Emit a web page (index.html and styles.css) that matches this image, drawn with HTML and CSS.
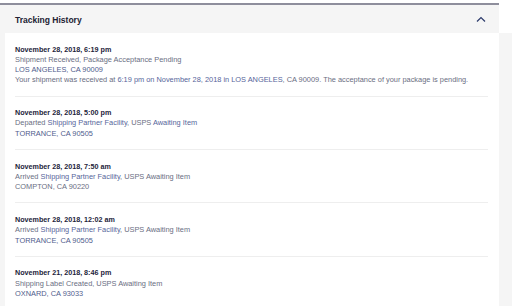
FILE: index.html
```html
<!DOCTYPE html>
<html>
<head>
<meta charset="utf-8">
<link rel="stylesheet" href="styles.css">
</head>
<body>
<div class="page">
  <div class="top">
    <div class="header">
      <span class="title">Tracking History</span>
      <svg class="chev" width="10" height="7" viewBox="0 0 10 7"><path d="M1 5.5 L5 1.5 L9 5.5" fill="none" stroke="#2b3a6b" stroke-width="1.2"/></svg>
    </div>
    <div class="top-fill"></div>
  </div>
  <div class="body">
    <div class="card">
      <div class="entry">
        <div class="date">November 28, 2018, 6:19 pm</div>
        <div class="line">Shipment Received, Package Acceptance Pending</div>
        <div class="line loc">LOS ANGELES, CA 90009</div>
        <div class="line">Your shipment was received at <span class="lk">6:19 pm on November 28, 2018 in LOS ANGELES</span>, CA 90009. The acceptance of your package is pending.</div>
      </div>
      <div class="entry">
        <div class="date">November 28, 2018, 5:00 pm</div>
        <div class="line">Departed <span class="lk">Shipping Partner Facility</span>, USPS <span class="lk">Awaiting Item</span></div>
        <div class="line loc">TORRANCE, CA 90505</div>
      </div>
      <div class="entry">
        <div class="date">November 28, 2018, 7:50 am</div>
        <div class="line">Arrived <span class="lk">Shipping Partner Facility</span>, USPS Awaiting Item</div>
        <div class="line">COMPTON, CA 90220</div>
      </div>
      <div class="entry">
        <div class="date">November 28, 2018, 12:02 am</div>
        <div class="line">Arrived <span class="lk">Shipping Partner Facility</span>, USPS Awaiting Item</div>
        <div class="line loc">TORRANCE, CA 90505</div>
      </div>
      <div class="entry">
        <div class="date">November 21, 2018, 8:46 pm</div>
        <div class="line">Shipping Label Created, USPS Awaiting Item</div>
        <div class="line loc">OXNARD, CA 93033</div>
      </div>
    </div>
  </div>
</div>
</body>
</html>
```
FILE: styles.css
```css
* { box-sizing: border-box; }
html, body { margin: 0; padding: 0; }
body {
  width: 512px;
  height: 306px;
  overflow: hidden;
  background: #ffffff;
  font-family: "Liberation Sans", Arial, sans-serif;
}
.page { display: flex; flex-direction: column; height: 306px; }
.top { display: flex; padding-top: 3px; }
.header {
  width: 499px;
  height: 30px;
  background: #f5f5f5;
  border-top: 2px solid #8e8e9c;
  display: flex;
  align-items: center;
  justify-content: space-between;
  padding: 2px 13px 0 15px;
}
.top-fill { flex: 1; background: #ffffff; }
.title {
  font-size: 8.5px;
  font-weight: bold;
  color: #222233;
}
.chev { display: block; margin-top: -1px; }
.body {
  flex: 1;
  background: #f5f5f5;
  padding-left: 5px;
}
.card {
  width: 494px;
  height: 100%;
  background: #ffffff;
  padding: 0 11px 0 10px;
}
.entry {
  padding: 11.5px 0 10px;
  border-bottom: 1px solid #eeeeee;
  line-height: 10.3px;
  font-size: 7.4px;
}
.date {
  color: #23243a;
  font-weight: bold;
  font-size: 7.2px;
}
.line { color: #6a6e82; }
.loc { color: #505c8c; }
.lk { color: #56659a; }
```
